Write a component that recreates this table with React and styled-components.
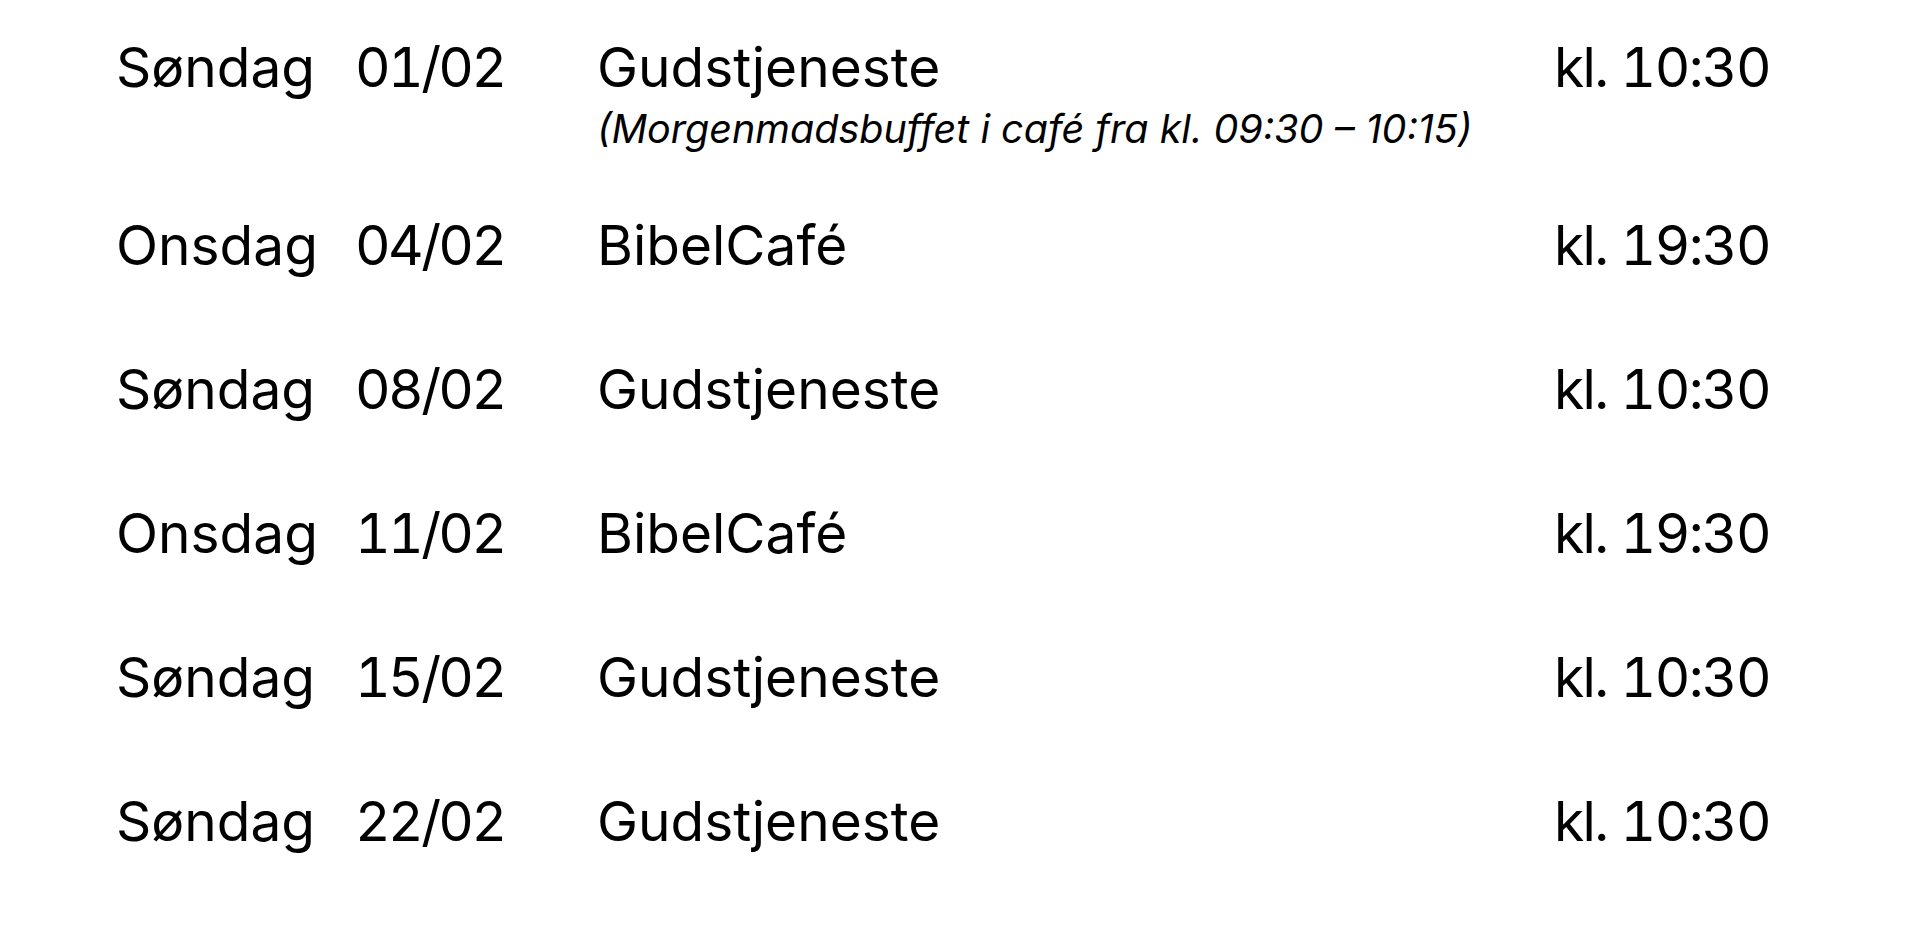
import React from "react";
import styled, { createGlobalStyle } from "styled-components";

const GlobalStyle = createGlobalStyle`
  html, body {
    margin: 0;
    background: #ffffff;
  }
  body {
    font-family: Inter, "Open Sans", "Noto Sans", sans-serif;
    color: #000000;
  }
`;

const Schedule = styled.main`
  display: flex;
  flex-direction: column;
  padding: 40px 150px 0 116px;
`;

const Row = styled.div`
  display: grid;
  grid-template-columns: 239px 242px 1fr auto;
  align-items: start;
  margin-bottom: ${(p) => (p.$tight ? "70px" : "89px")};
`;

const Cell = styled.div`
  font-size: 55px;
  line-height: 55px;
  white-space: nowrap;
`;

const DateCell = styled(Cell)`
  font-variant-numeric: tabular-nums;
  letter-spacing: -2.6px;
`;

const Time = styled(Cell)`
  justify-self: end;
  font-variant-numeric: tabular-nums;
  letter-spacing: -1.6px;
`;

const Event = styled.div`
  display: flex;
  flex-direction: column;
`;

const Note = styled.div`
  font-size: 39.5px;
  font-style: italic;
  line-height: 37px;
  margin-top: 16px;
  white-space: nowrap;
`;

const events = [
  { day: "Søndag", date: "01/02", title: "Gudstjeneste", time: "kl. 10:30", note: "(Morgenmadsbuffet i café fra kl. 09:30 – 10:15)" },
  { day: "Onsdag", date: "04/02", title: "BibelCafé", time: "kl. 19:30" },
  { day: "Søndag", date: "08/02", title: "Gudstjeneste", time: "kl. 10:30" },
  { day: "Onsdag", date: "11/02", title: "BibelCafé", time: "kl. 19:30" },
  { day: "Søndag", date: "15/02", title: "Gudstjeneste", time: "kl. 10:30" },
  { day: "Søndag", date: "22/02", title: "Gudstjeneste", time: "kl. 10:30" },
];

export default function App() {
  return (
    <>
      <GlobalStyle />
      <Schedule>
        {events.map((e) => (
          <Row key={e.date} $tight={!!e.note}>
            <Cell>{e.day}</Cell>
            <DateCell>{e.date}</DateCell>
            <Event>
              <Cell>{e.title}</Cell>
              {e.note && <Note>{e.note}</Note>}
            </Event>
            <Time>{e.time}</Time>
          </Row>
        ))}
      </Schedule>
    </>
  );
}
